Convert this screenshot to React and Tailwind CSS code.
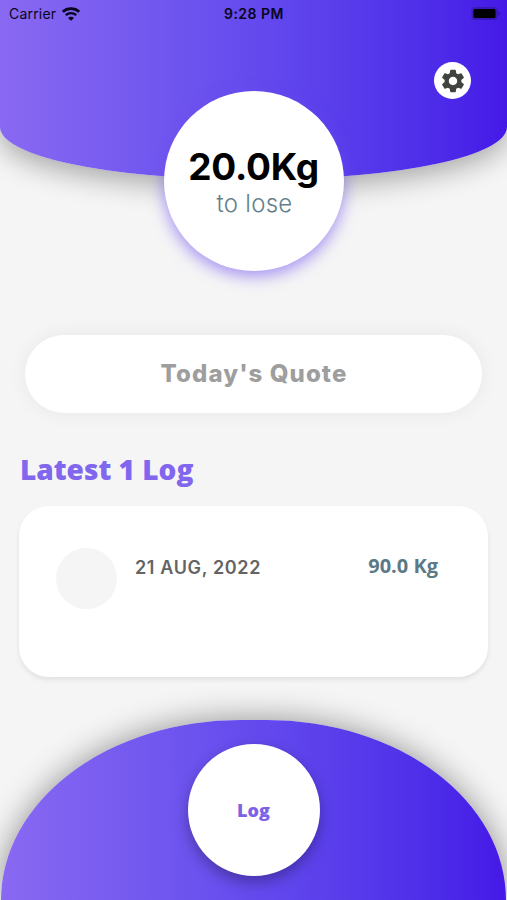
import React from 'react';
import { MdSettings } from 'react-icons/md';

const logs = [{ id: 1, date: '21 AUG, 2022', weight: '90.0 Kg' }];

function WifiIcon() {
  return (
    <svg viewBox="0 0 18 14" className="h-[14px] w-[18px]" fill="none" stroke="#08051c">
      <path d="M.8 4.8C5.2 .5 12.8 .5 17.2 4.8" strokeWidth="2.7" />
      <path d="M3.8 8.2c2.9-2.8 7.5-2.8 10.4 0" strokeWidth="2.4" />
      <path d="M6 10.9c1.7-1.7 4.3-1.7 6 0L9 13.8z" fill="#08051c" stroke="none" />
    </svg>
  );
}

function BatteryIcon() {
  return (
    <svg viewBox="0 0 30 14" className="h-[14px] w-[30px]">
      <rect x="0.5" y="0" width="26" height="13" rx="3.5" fill="#000" fillOpacity="0.2" />
      <rect x="2.5" y="2" width="22" height="9" rx="1.5" fill="#000" />
      <path d="M27.2 4.3c2 .7 2 3.7 0 4.4z" fill="#000" fillOpacity="0.3" />
    </svg>
  );
}

function StatusBar() {
  return (
    <div className="grid h-7 grid-cols-3 items-center pl-[9px] pr-[6px] text-[14px] leading-7 text-[#08051c]">
      <div className="flex items-center gap-[6px]">
        <span className="tracking-[0.2px]">Carrier</span>
        <WifiIcon />
      </div>
      <div className="-ml-[2px] text-center font-semibold tracking-[0.5px]">9:28 PM</div>
      <div className="flex justify-end">
        <BatteryIcon />
      </div>
    </div>
  );
}

function LogCard({ log }) {
  return (
    <div className="flex h-[171px] items-start rounded-[30px] bg-white pl-[37px] pr-[50px] pt-[42px] shadow-[0_3px_5px_rgba(0,0,0,0.08)]">
      <div className="size-[61px] shrink-0 rounded-full bg-[#f5f5f5]" />
      <span className="ml-[18px] mt-[6px] flex-1 text-[18px] font-semibold leading-7 tracking-[0.65px] text-[#646464]">
        {log.date}
      </span>
      <span className="mt-1 font-['Open_Sans',sans-serif] text-[20px] font-bold leading-7 text-[#5b7986]">
        {log.weight}
      </span>
    </div>
  );
}

export default function App() {
  return (
    <div className="flex h-[900px] w-[507px] flex-col overflow-hidden bg-[#f5f5f5] font-['Inter',sans-serif]">
      <header className="h-[179px] shrink-0 rounded-b-[240px_52px] bg-linear-to-r from-[#8969f2] to-[#4518e7] shadow-[0_8px_28px_rgba(0,0,0,0.32)]">
        <StatusBar />
        <div className="flex justify-end pr-[36px] pt-[34px]">
          <button type="button" aria-label="Settings" className="flex size-[37px] items-center justify-center rounded-full bg-white">
            <MdSettings className="size-7 text-[#40443f]" />
          </button>
        </div>
      </header>

      <div className="relative mx-auto -mt-[88px] flex size-[180px] shrink-0 flex-col items-center rounded-full bg-white pt-[53px] shadow-[0_5px_16px_rgba(110,75,240,0.6)]">
        <div className="text-[37px] font-bold leading-[46px] tracking-[-0.2px] text-black">20.0Kg</div>
        <div className="pl-[2px] text-[24px] font-light leading-7 tracking-[0.3px] text-[#637e89]">to lose</div>
      </div>

      <main className="flex flex-1 flex-col px-[19px] pt-16">
        <div className="mx-[6px] flex h-[78px] items-center justify-center rounded-full bg-white pl-px text-[24px] font-extrabold tracking-[1.1px] text-[#9e9e9e] shadow-[0_0_20px_rgba(0,0,0,0.06)]">
          Today's Quote
        </div>
        <h2 className="mt-[36px] pl-px font-['Open_Sans',sans-serif] text-[28px] font-extrabold leading-10 text-[#8167ee]">
          Latest {logs.length} Log
        </h2>
        <div className="mt-[17px]">
          {logs.map((log) => (
            <LogCard key={log.id} log={log} />
          ))}
        </div>
      </main>

      <footer className="mx-px flex h-[180px] shrink-0 justify-center rounded-t-[239px_180px] bg-linear-to-r from-[#8969f2] to-[#4518e7] pt-6 shadow-[0_0_32px_rgba(0,0,0,0.42)]">
        <button type="button" className="flex size-[132px] items-center justify-center rounded-full bg-white font-['Open_Sans',sans-serif] text-[18px] font-extrabold text-[#7c62e6] shadow-[0_6px_14px_rgba(0,0,0,0.3)]">
          Log
        </button>
      </footer>
    </div>
  );
}
